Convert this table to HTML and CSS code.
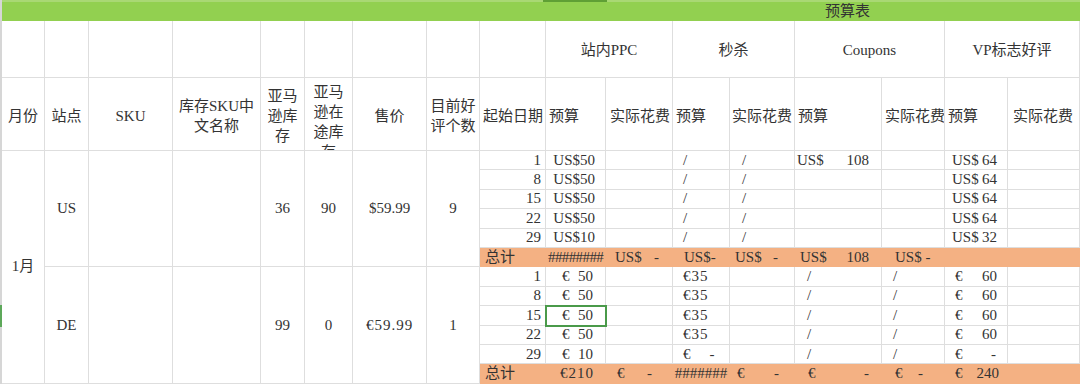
FILE: index.html
```html
<!DOCTYPE html>
<html lang="zh">
<head>
<meta charset="utf-8">
<title>预算表</title>
<link rel="stylesheet" href="styles.css">
</head>
<body>
<div class="page">
  <div class="rowhdr"><div class="mark"></div></div>
  <div class="main">
    <div class="topstrip"><div class="colsel"></div></div>
    <div class="title">预算表</div>
    <div class="grid">
      <!-- header row A -->
      <div class="c"></div><div class="c"></div><div class="c"></div><div class="c"></div><div class="c"></div>
      <div class="c"></div><div class="c"></div><div class="c"></div><div class="c"></div>
      <div class="c ctr cs2 ha">站内PPC</div>
      <div class="c ctr cs2 ha">秒杀</div>
      <div class="c ctr cs2 ha">Coupons</div>
      <div class="c ctr cs2 ha">VP标志好评</div>
      <!-- header row B -->
      <div class="c ctr hb">月份</div>
      <div class="c ctr hb">站点</div>
      <div class="c ctr hb">SKU</div>
      <div class="c ctr hw">库存SKU中文名称</div>
      <div class="c ctr hw">亚马逊库存</div>
      <div class="c ctr hw">亚马逊在途库存</div>
      <div class="c ctr hb">售价</div>
      <div class="c ctr hw">目前好评个数</div>
      <div class="c hb pl3">起始日期</div>
      <div class="c hb pl3">预算</div>
      <div class="c hb pl4">实际花费</div>
      <div class="c hb pl3">预算</div>
      <div class="c hb pl2">实际花费</div>
      <div class="c hb pl3">预算</div>
      <div class="c hb pl3">实际花费</div>
      <div class="c hb pl3">预算</div>
      <div class="c hb pl5">实际花费</div>

      <!-- US block -->
      <div class="c ctr rs12">1月</div>
      <div class="c ctr rs6">US</div>
      <div class="c rs6"></div>
      <div class="c rs6"></div>
      <div class="c ctr rs6">36</div>
      <div class="c ctr rs6">90</div>
      <div class="c ctr rs6">$59.99</div>
      <div class="c ctr rs6">9</div>

      <div class="c r">1</div><div class="c r pr10">US$50</div><div class="c"></div>
      <div class="c pl10">/</div><div class="c pl12">/</div>
      <div class="c acc pl2 pr12"><span>US$</span><span>108</span></div><div class="c"></div>
      <div class="c acc pl7 pr10"><span>US$</span><span>64</span></div><div class="c"></div>

      <div class="c r">8</div><div class="c r pr10">US$50</div><div class="c"></div>
      <div class="c pl10">/</div><div class="c pl12">/</div>
      <div class="c"></div><div class="c"></div>
      <div class="c acc pl7 pr10"><span>US$</span><span>64</span></div><div class="c"></div>

      <div class="c r">15</div><div class="c r pr10">US$50</div><div class="c"></div>
      <div class="c pl10">/</div><div class="c pl12">/</div>
      <div class="c"></div><div class="c"></div>
      <div class="c acc pl7 pr10"><span>US$</span><span>64</span></div><div class="c"></div>

      <div class="c r">22</div><div class="c r pr10">US$50</div><div class="c"></div>
      <div class="c pl10">/</div><div class="c pl12">/</div>
      <div class="c"></div><div class="c"></div>
      <div class="c acc pl7 pr10"><span>US$</span><span>64</span></div><div class="c"></div>

      <div class="c r">29</div><div class="c r pr10">US$10</div><div class="c"></div>
      <div class="c pl10">/</div><div class="c pl12">/</div>
      <div class="c"></div><div class="c"></div>
      <div class="c acc pl7 pr10"><span>US$</span><span>32</span></div><div class="c"></div>

      <div class="c t pl5">总计</div>
      <div class="c t pl2 hash8">########</div>
      <div class="c t acc pl9 pr13"><span>US$</span><span>-</span></div>
      <div class="c t pl11">US$-</div>
      <div class="c t acc pl5 pr16"><span>US$</span><span>-</span></div>
      <div class="c t acc pl5 pr12"><span>US$</span><span>108</span></div>
      <div class="c t pl13">US$ -</div>
      <div class="c t"></div>
      <div class="c t"></div>

      <!-- DE block -->
      <div class="c ctr rs6">DE</div>
      <div class="c rs6"></div>
      <div class="c rs6"></div>
      <div class="c ctr rs6">99</div>
      <div class="c ctr rs6">0</div>
      <div class="c ctr rs6 wide">€59.99</div>
      <div class="c ctr rs6">1</div>

      <div class="c r">1</div><div class="c acc pl16 pr12"><span>€</span><span>50</span></div><div class="c"></div>
      <div class="c pl10 wide">€35</div><div class="c"></div>
      <div class="c pl12">/</div><div class="c pl11">/</div>
      <div class="c acc pl10 pr10"><span>€</span><span>60</span></div><div class="c"></div>

      <div class="c r">8</div><div class="c acc pl16 pr12"><span>€</span><span>50</span></div><div class="c"></div>
      <div class="c pl10 wide">€35</div><div class="c"></div>
      <div class="c pl12">/</div><div class="c pl11">/</div>
      <div class="c acc pl10 pr10"><span>€</span><span>60</span></div><div class="c"></div>

      <div class="c r">15</div><div class="c acc pl16 pr12 sel"><span>€</span><span>50</span></div><div class="c"></div>
      <div class="c pl10 wide">€35</div><div class="c"></div>
      <div class="c pl12">/</div><div class="c pl11">/</div>
      <div class="c acc pl10 pr10"><span>€</span><span>60</span></div><div class="c"></div>

      <div class="c r">22</div><div class="c acc pl16 pr12"><span>€</span><span>50</span></div><div class="c"></div>
      <div class="c pl10 wide">€35</div><div class="c"></div>
      <div class="c pl12">/</div><div class="c pl11">/</div>
      <div class="c acc pl10 pr10"><span>€</span><span>60</span></div><div class="c"></div>

      <div class="c r">29</div><div class="c acc pl16 pr12"><span>€</span><span>10</span></div><div class="c"></div>
      <div class="c pl10"><span>€</span><span class="gap">-</span></div><div class="c"></div>
      <div class="c pl12">/</div><div class="c pl11">/</div>
      <div class="c acc pl10 pr11"><span>€</span><span>-</span></div><div class="c"></div>

      <div class="c t pl5">总计</div>
      <div class="c t r pr11 wide">€210</div>
      <div class="c t acc pl11 pr20"><span>€</span><span>-</span></div>
      <div class="c t ctr">#######</div>
      <div class="c t acc pl7 pr15"><span>€</span><span>-</span></div>
      <div class="c t acc pl13 pr12"><span>€</span><span>-</span></div>
      <div class="c t acc pl13 pr21"><span>€</span><span>-</span></div>
      <div class="c t acc pl10 pr8"><span>€</span><span>240</span></div>
      <div class="c t"></div>
    </div>
  </div>
</div>
</body>
</html>
```

FILE: styles.css
```css
* { box-sizing: border-box; }
html, body { margin: 0; padding: 0; background: #fff; }
body {
  font-family: "Liberation Serif", "Noto Sans CJK SC", serif;
  font-size: 15px;
  color: #333;
  width: 1080px;
  height: 384px;
  overflow: hidden;
}
.page { display: flex; width: 1080px; }
.rowhdr { width: 2px; flex: none; background: #d6d6d6; height: 400px; }
.rowhdr .mark { margin-top: 305px; height: 22px; background: #5da85a; }
.main { width: 1078px; flex: none; }
.topstrip { height: 2px; background: #a9d874; display: flex; }
.colsel { margin-left: 541px; width: 64px; background: #5f9f35; }
.title {
  height: 19px;
  line-height: 19px;
  background: #92d050;
  padding-left: 823px;
  color: #333;
}
.grid {
  display: grid;
  grid-template-columns: 43px 44px 84px 88px 44px 48px 74px 53px 66px 60px 67px 57px 65px 87px 63px 63px 72px;
  grid-template-rows: 57px 73px repeat(12, 19.4px);
}
.c {
  border-right: 1px solid #dedede;
  border-bottom: 1px solid #dedede;
  display: flex;
  align-items: center;
  overflow: hidden;
  white-space: nowrap;
  min-width: 0;
  line-height: 19px;
}
.ctr { justify-content: center; text-align: center; }
.ha { padding-top: 3px; }
.hb { padding-top: 4px; }
.hw {
  white-space: normal;
  line-height: 20px;
  padding: 4px 2px 0;
  align-items: safe center;
}
.cs2 { grid-column: span 2; }
.rs6 { grid-row: span 6; }
.rs12 { grid-row: span 12; }
.r { justify-content: flex-end; padding-right: 4px; }
.acc { justify-content: space-between; }
.t { background: #f4b183; border-right-color: #f4b183; border-bottom-color: #f4b183; }
.hash8 { letter-spacing: -0.6px; }
.wide { letter-spacing: 1px; }
.gap { margin-left: 19px; }
.sel { outline: 2px solid #4a9a4a; outline-offset: -1px; position: relative; z-index: 1; }

.pl2 { padding-left: 2px; }
.pl3 { padding-left: 3px; }
.pl4 { padding-left: 4px; }
.pl5 { padding-left: 5px; }
.pl7 { padding-left: 7px; }
.pl9 { padding-left: 9px; }
.pl10 { padding-left: 10px; }
.pl11 { padding-left: 11px; }
.pl12 { padding-left: 12px; }
.pl13 { padding-left: 13px; }
.pl16 { padding-left: 16px; }
.pr8 { padding-right: 8px; }
.pr10 { padding-right: 10px; }
.pr11 { padding-right: 11px; }
.pr12 { padding-right: 12px; }
.pr13 { padding-right: 13px; }
.pr15 { padding-right: 15px; }
.pr16 { padding-right: 16px; }
.pr20 { padding-right: 20px; }
.pr21 { padding-right: 21px; }
```
